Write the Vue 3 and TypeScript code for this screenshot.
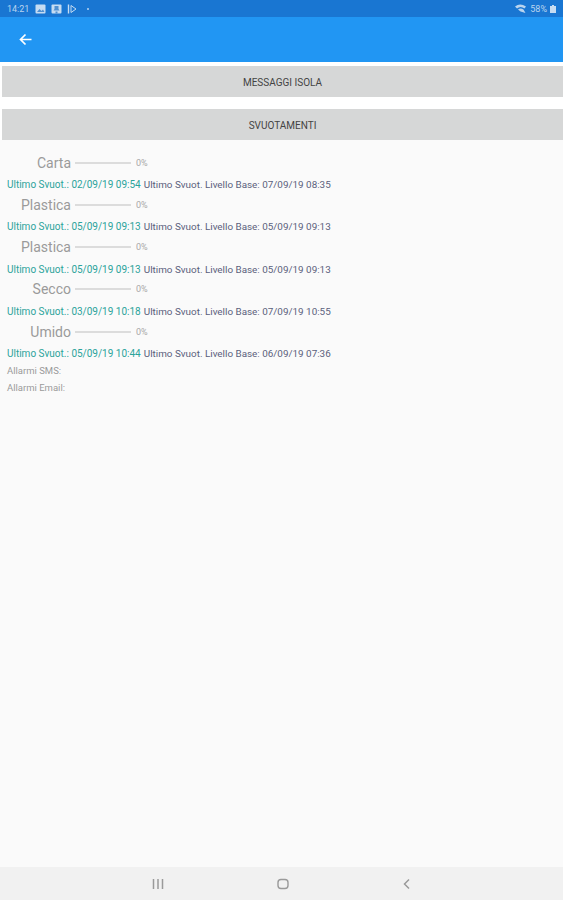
<template>
  <div class="screen">
    <div class="status-bar">
      <div class="status-left">
        <span class="status-time">14:21</span>
        <svg class="status-icon" width="11" height="10" viewBox="0 0 11 10"><rect x="0.5" y="0.5" width="10" height="9" rx="1" fill="#c6dcf2" /><path d="M2 8l2.500-3 2 2 1.500-1.500L9.500 8z" fill="#4f8fd0" /></svg>
        <svg class="status-icon" width="11" height="10" viewBox="0 0 11 10"><rect x="0.5" y="0.5" width="10" height="9" rx="1" fill="#c6dcf2" /><path d="M3.500 2h4v3l1 1.500h-6l1-1.500zM4.500 7.500h2v2h-2z" fill="#4f8fd0" /></svg>
        <svg class="status-icon" width="10" height="10" viewBox="0 0 10 10"><path d="M1.500 .5v9" stroke="#c6dcf2" stroke-width="1.400" /><path d="M4 1.500L9 5 4 8.500z" fill="none" stroke="#c6dcf2" /></svg>
        <span class="status-dot"></span>
      </div>
      <div class="status-right">
        <svg width="12" height="10" viewBox="0 0 12 10"><path d="M0 2.500Q5-1.500 11 2.500L9.500 4.500Q5.500 1.500 2 4.500zM3 5.500Q5.500 3.500 8.500 5.500L10.500 9 5.500 7.500z" fill="#b9d4ef" /></svg>
        <span class="status-battery">58%</span>
        <svg width="6" height="8" viewBox="0 0 6 8"><path d="M2 0h2v1H6v7H0V1h2z" fill="#c6dcf2" /></svg>
      </div>
    </div>

    <header class="app-bar">
      <button class="back-btn" type="button" aria-label="Indietro">
        <svg width="13" height="13" viewBox="0 0 13 13"><path d="M12.500 6.500H2M6.500 1.500l-5 5 5 5" fill="none" stroke="#fff" stroke-width="1.700" /></svg>
      </button>
    </header>

    <main class="content">
      <div class="section-btn">MESSAGGI ISOLA</div>
      <div class="section-btn">SVUOTAMENTI</div>

      <div class="bins">
        <div v-for="(bin, i) in bins" :key="i" class="bin">
          <div class="bin-head">
            <span class="bin-name">{{ bin.name }}</span>
            <span class="bin-bar"><span class="bin-fill" :style="{ width: bin.level + '%' }"></span></span>
            <span class="bin-pct">{{ bin.level }}%</span>
          </div>
          <div class="bin-dates">
            <span class="date-last">Ultimo Svuot.: {{ bin.last }}</span>
            <span class="date-base">Ultimo Svuot. Livello Base: {{ bin.base }}</span>
          </div>
        </div>
      </div>

      <div class="alarm">Allarmi SMS:</div>
      <div class="alarm">Allarmi Email:</div>
    </main>

    <nav class="nav-bar">
      <svg width="12" height="12" viewBox="0 0 12 12"><path d="M1.500 1v10M6 1v10M10.500 1v10" stroke="#9a9a9a" stroke-width="1.500" /></svg>
      <svg width="12" height="12" viewBox="0 0 12 12"><rect x="1" y="1.500" width="10" height="9" rx="3" fill="none" stroke="#9a9a9a" stroke-width="1.400" /></svg>
      <svg width="12" height="12" viewBox="0 0 12 12"><path d="M8 1.500L3.500 6 8 10.500" fill="none" stroke="#9a9a9a" stroke-width="1.500" /></svg>
    </nav>
  </div>
</template>

<script setup lang="ts">
interface Bin {
  name: string
  level: number
  last: string
  base: string
}

const bins: Bin[] = [
  { name: 'Carta', level: 0, last: '02/09/19 09:54', base: '07/09/19 08:35' },
  { name: 'Plastica', level: 0, last: '05/09/19 09:13', base: '05/09/19 09:13' },
  { name: 'Plastica', level: 0, last: '05/09/19 09:13', base: '05/09/19 09:13' },
  { name: 'Secco', level: 0, last: '03/09/19 10:18', base: '07/09/19 10:55' },
  { name: 'Umido', level: 0, last: '05/09/19 10:44', base: '06/09/19 07:36' },
]
</script>

<style>
html,
body {
  margin: 0;
  background: #fafafa;
}
</style>

<style scoped>
.screen {
  display: flex;
  flex-direction: column;
  width: 563px;
  height: 900px;
  overflow: hidden;
  background: #fafafa;
  font-family: Roboto, "Liberation Sans", sans-serif;
}
.status-bar {
  display: flex;
  align-items: center;
  justify-content: space-between;
  flex: 0 0 17px;
  padding: 0 7px;
  background: #1976d2;
  color: #b9d4ef;
  font-size: 9px;
}
.status-left,
.status-right {
  display: flex;
  align-items: center;
  gap: 3px;
}
.status-time {
  margin-right: 3px;
}
.status-icon {
  margin-right: 2px;
}
.status-dot {
  width: 2px;
  height: 2px;
  margin-left: 5px;
  border-radius: 50%;
  background: #b9d4ef;
}
.app-bar {
  display: flex;
  align-items: center;
  flex: 0 0 45px;
  padding-left: 19px;
  background: #2196f3;
}
.back-btn {
  display: flex;
  padding: 0;
  border: none;
  background: none;
}
.content {
  flex: 1;
  padding-top: 4px;
  background: linear-gradient(#fff, #fff 78px, #fafafa 78px);
}
.section-btn {
  display: flex;
  align-items: center;
  justify-content: center;
  box-sizing: border-box;
  height: 31px;
  margin: 0 0 12px 2px;
  padding-top: 1px;
  background: #d6d7d7;
  color: #444;
  font-size: 10px;
}
.bins {
  margin-top: 10.500px;
}
.bin {
  height: 42.250px;
}
.bin-head {
  display: flex;
  align-items: center;
  height: 21px;
}
.bin-name {
  width: 71px;
  text-align: right;
  color: #9a9a9a;
  font-size: 14px;
}
.bin-bar {
  width: 56px;
  height: 2px;
  margin-left: 4px;
  background: #dcdcdc;
}
.bin-fill {
  display: block;
  height: 100%;
  background: #2196f3;
}
.bin-pct {
  margin-left: 5px;
  color: #a8a8a8;
  font-size: 9px;
}
.bin-dates {
  display: flex;
  gap: 3px;
  padding: 5px 0 0 7px;
  font-size: 10px;
  line-height: 14px;
}
.date-last {
  color: #2ba39a;
}
.date-base {
  color: #5a5f7c;
  font-size: 9.900px;
}
.alarm {
  height: 17px;
  padding-left: 7px;
  color: #9a9a9a;
  font-size: 9.500px;
  line-height: 15px;
}
.nav-bar {
  display: flex;
  align-items: center;
  justify-content: space-between;
  flex: 0 0 33px;
  padding: 0 150px 0 152px;
  background: #f1f1f1;
}
</style>
